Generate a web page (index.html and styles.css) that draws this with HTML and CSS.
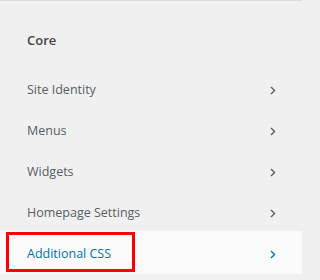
FILE: index.html
```html
<!DOCTYPE html>
<html>
<head>
<meta charset="utf-8">
<link rel="stylesheet" href="styles.css">
</head>
<body>
<div class="panel">
  <h3 class="section-head">Core</h3>
  <ul class="menu">
    <li class="row"><span>Site Identity</span><svg class="chev" width="6" height="9" viewBox="0 0 6 9"><polyline points="1,1 4.5,4.5 1,8" fill="none" stroke="currentColor" stroke-width="1.4"/></svg></li>
    <li class="row"><span>Menus</span><svg class="chev" width="6" height="9" viewBox="0 0 6 9"><polyline points="1,1 4.5,4.5 1,8" fill="none" stroke="currentColor" stroke-width="1.4"/></svg></li>
    <li class="row"><span>Widgets</span><svg class="chev" width="6" height="9" viewBox="0 0 6 9"><polyline points="1,1 4.5,4.5 1,8" fill="none" stroke="currentColor" stroke-width="1.4"/></svg></li>
    <li class="row"><span>Homepage Settings</span><svg class="chev" width="6" height="9" viewBox="0 0 6 9"><polyline points="1,1 4.5,4.5 1,8" fill="none" stroke="currentColor" stroke-width="1.4"/></svg></li>
    <li class="row active"><span>Additional CSS</span><svg class="chev" width="6" height="9" viewBox="0 0 6 9"><polyline points="1,1 4.5,4.5 1,8" fill="none" stroke="currentColor" stroke-width="1.4"/></svg>
      <div class="highlight"></div>
    </li>
  </ul>
</div>
</body>
</html>
```

FILE: styles.css
```css
html, body {
  margin: 0;
  padding: 0;
  background: #f0f0f0;
}
body {
  font-family: "Open Sans", "Noto Sans", sans-serif;
  overflow: hidden;
}
.panel {
  width: 302px;
  border-top: 1px solid #dcdcdc;
  height: 279px;
}
.section-head {
  margin: 0;
  padding: 29px 0 0 27px;
  height: 39px;
  font-size: 13px;
  font-weight: 600;
  color: #444;
  line-height: 20px;
}
.menu {
  list-style: none;
  margin: 0;
  padding: 0;
}
.row {
  position: relative;
  display: flex;
  align-items: center;
  justify-content: space-between;
  height: 41px;
  padding: 1px 26px 0 27px;
  box-sizing: border-box;
  font-size: 12.5px;
  color: #555d66;
}
.row span {
  line-height: 20px;
}
.chev {
  color: #555d66;
  display: block;
}
.row.active {
  background: #fafafa;
  margin-top: -2px;
  height: 43px;
  padding-top: 3px;
  padding-bottom: 0;
  color: #0073aa;
}
.row.active .chev {
  color: #0073aa;
}
.highlight {
  position: absolute;
  left: 6px;
  top: 1px;
  width: 123px;
  height: 34px;
  border: 3px solid #ff0000;
}
```
